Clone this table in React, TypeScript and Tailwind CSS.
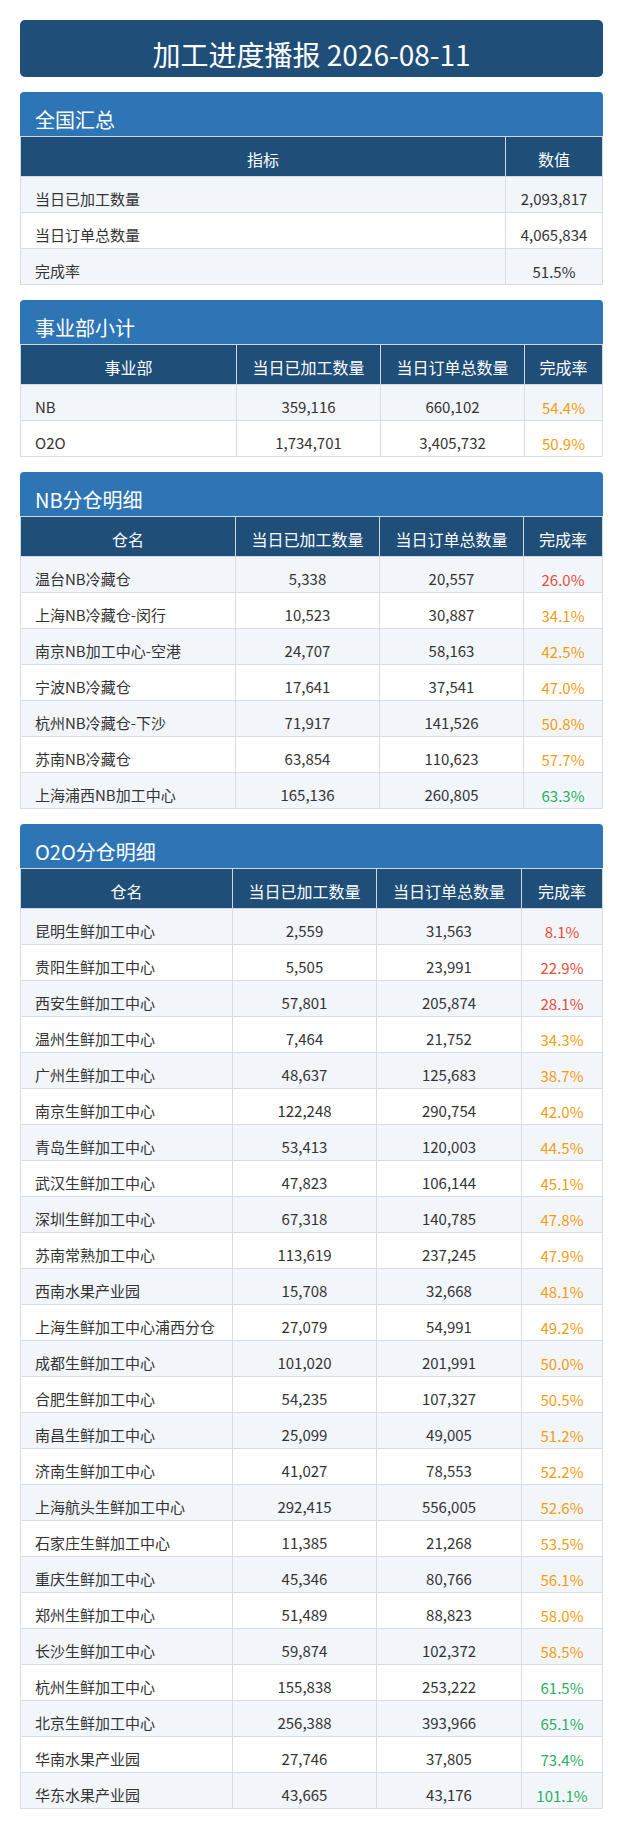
const FONT = { fontFamily: '"Noto Sans CJK SC", "Noto Sans", sans-serif' };

type Row = [string, number, number];

const bizRows: Row[] = [
  ["NB", 359116, 660102],
  ["O2O", 1734701, 3405732],
];

const nbRows: [string, number, number, number][] = [
  ["温台NB冷藏仓", 5338, 20557, 26.0],
  ["上海NB冷藏仓-闵行", 10523, 30887, 34.1],
  ["南京NB加工中心-空港", 24707, 58163, 42.5],
  ["宁波NB冷藏仓", 17641, 37541, 47.0],
  ["杭州NB冷藏仓-下沙", 71917, 141526, 50.8],
  ["苏南NB冷藏仓", 63854, 110623, 57.7],
  ["上海浦西NB加工中心", 165136, 260805, 63.3],
];

const o2oRows: [string, number, number, number][] = [
  ["昆明生鲜加工中心", 2559, 31563, 8.1],
  ["贵阳生鲜加工中心", 5505, 23991, 22.9],
  ["西安生鲜加工中心", 57801, 205874, 28.1],
  ["温州生鲜加工中心", 7464, 21752, 34.3],
  ["广州生鲜加工中心", 48637, 125683, 38.7],
  ["南京生鲜加工中心", 122248, 290754, 42.0],
  ["青岛生鲜加工中心", 53413, 120003, 44.5],
  ["武汉生鲜加工中心", 47823, 106144, 45.1],
  ["深圳生鲜加工中心", 67318, 140785, 47.8],
  ["苏南常熟加工中心", 113619, 237245, 47.9],
  ["西南水果产业园", 15708, 32668, 48.1],
  ["上海生鲜加工中心浦西分仓", 27079, 54991, 49.2],
  ["成都生鲜加工中心", 101020, 201991, 50.0],
  ["合肥生鲜加工中心", 54235, 107327, 50.5],
  ["南昌生鲜加工中心", 25099, 49005, 51.2],
  ["济南生鲜加工中心", 41027, 78553, 52.2],
  ["上海航头生鲜加工中心", 292415, 556005, 52.6],
  ["石家庄生鲜加工中心", 11385, 21268, 53.5],
  ["重庆生鲜加工中心", 45346, 80766, 56.1],
  ["郑州生鲜加工中心", 51489, 88823, 58.0],
  ["长沙生鲜加工中心", 59874, 102372, 58.5],
  ["杭州生鲜加工中心", 155838, 253222, 61.5],
  ["北京生鲜加工中心", 256388, 393966, 65.1],
  ["华南水果产业园", 27746, 37805, 73.4],
  ["华东水果产业园", 43665, 43176, 101.1],
];

const fmt = (n: number) => n.toLocaleString("en-US");

function rateColor(r: number) {
  if (r < 30) return "text-[#e74c3c]";
  if (r < 60) return "text-[#f39c12]";
  return "text-[#27ae60]";
}

const th = "border border-[#d0d8e2] bg-[#1f4e79] text-white text-[16px] font-normal leading-[23px] pt-[11px] pb-[5px] text-center";
const td = "border border-[#d6dde6] text-[15px] leading-[22px] pt-[11px] pb-[2px]";
const tdRate = "border border-[#d6dde6] text-[15px] leading-[22px] pt-[12px] pb-[1px] text-center";

function Section({ title, children }: { title: string; children: React.ReactNode }) {
  return (
    <section>
      <div className="rounded-t-[4px] bg-[#2e75b6] px-[15px] pt-[14px] pb-[2px] text-[20px] leading-[28px] text-white">
        {title}
      </div>
      {children}
    </section>
  );
}

function DetailTable({ first, widths, rows }: { first: string; widths: string[]; rows: [string, number, number, number][] }) {
  return (
    <table className="w-full table-fixed border-collapse">
      <colgroup>
        {widths.map((w, i) => <col key={i} className={w} />)}
      </colgroup>
      <thead>
        <tr>
          <th className={th}>{first}</th>
          <th className={th}>当日已加工数量</th>
          <th className={th}>当日订单总数量</th>
          <th className={th}>完成率</th>
        </tr>
      </thead>
      <tbody>
        {rows.map(([name, done, total, rate], i) => (
          <tr key={name} className={i % 2 === 0 ? "bg-[#f2f6fa]" : "bg-white"}>
            <td className={`${td} pl-[14px] text-[#333]`}>{name}</td>
            <td className={`${td} text-center text-[#333]`}>{fmt(done)}</td>
            <td className={`${td} text-center text-[#333]`}>{fmt(total)}</td>
            <td className={`${tdRate} ${rateColor(rate)}`}>{rate.toFixed(1)}%</td>
          </tr>
        ))}
      </tbody>
    </table>
  );
}

export default function App() {
  const summary = [
    ["当日已加工数量", "2,093,817"],
    ["当日订单总数量", "4,065,834"],
    ["完成率", "51.5%"],
  ];

  return (
    <div className="min-h-screen bg-white px-5 py-5" style={FONT}>
      <div className="flex flex-col gap-[15px]">
        <div className="rounded-[5px] bg-[#1f4e79] pt-[14px] pb-[2px] text-center text-[28px] leading-[41px] text-white">
          加工进度播报 2026-08-11
        </div>

        <Section title="全国汇总">
          <table className="w-full table-fixed border-collapse">
            <colgroup>
              <col className="w-[485px]" />
              <col />
            </colgroup>
            <thead>
              <tr>
                <th className={th}>指标</th>
                <th className={th}>数值</th>
              </tr>
            </thead>
            <tbody>
              {summary.map(([k, v], i) => (
                <tr key={k} className={i % 2 === 0 ? "bg-[#f2f6fa]" : "bg-white"}>
                  <td className={`${td} pl-[14px] text-[#333]`}>{k}</td>
                  <td className={i === 2 ? `${tdRate} text-[#333]` : `${td} text-center text-[#333]`}>{v}</td>
                </tr>
              ))}
            </tbody>
          </table>
        </Section>

        <Section title="事业部小计">
          <table className="w-full table-fixed border-collapse">
            <colgroup>
              <col className="w-[216px]" />
              <col className="w-[144px]" />
              <col className="w-[144px]" />
              <col />
            </colgroup>
            <thead>
              <tr>
                <th className={th}>事业部</th>
                <th className={th}>当日已加工数量</th>
                <th className={th}>当日订单总数量</th>
                <th className={th}>完成率</th>
              </tr>
            </thead>
            <tbody>
              {bizRows.map(([name, done, total], i) => {
                const rate = Math.round((done / total) * 1000) / 10;
                return (
                  <tr key={name} className={i % 2 === 0 ? "bg-[#f2f6fa]" : "bg-white"}>
                    <td className={`${td} pl-[14px] text-[#333]`}>{name}</td>
                    <td className={`${td} text-center text-[#333]`}>{fmt(done)}</td>
                    <td className={`${td} text-center text-[#333]`}>{fmt(total)}</td>
                    <td className={`${tdRate} ${rateColor(rate)}`}>{rate.toFixed(1)}%</td>
                  </tr>
                );
              })}
            </tbody>
          </table>
        </Section>

        <Section title="NB分仓明细">
          <DetailTable first="仓名" widths={["w-[215px]", "w-[144px]", "w-[144px]", ""]} rows={nbRows} />
        </Section>

        <Section title="O2O分仓明细">
          <DetailTable first="仓名" widths={["w-[212px]", "w-[144px]", "w-[145px]", ""]} rows={o2oRows} />
        </Section>
      </div>
    </div>
  );
}
